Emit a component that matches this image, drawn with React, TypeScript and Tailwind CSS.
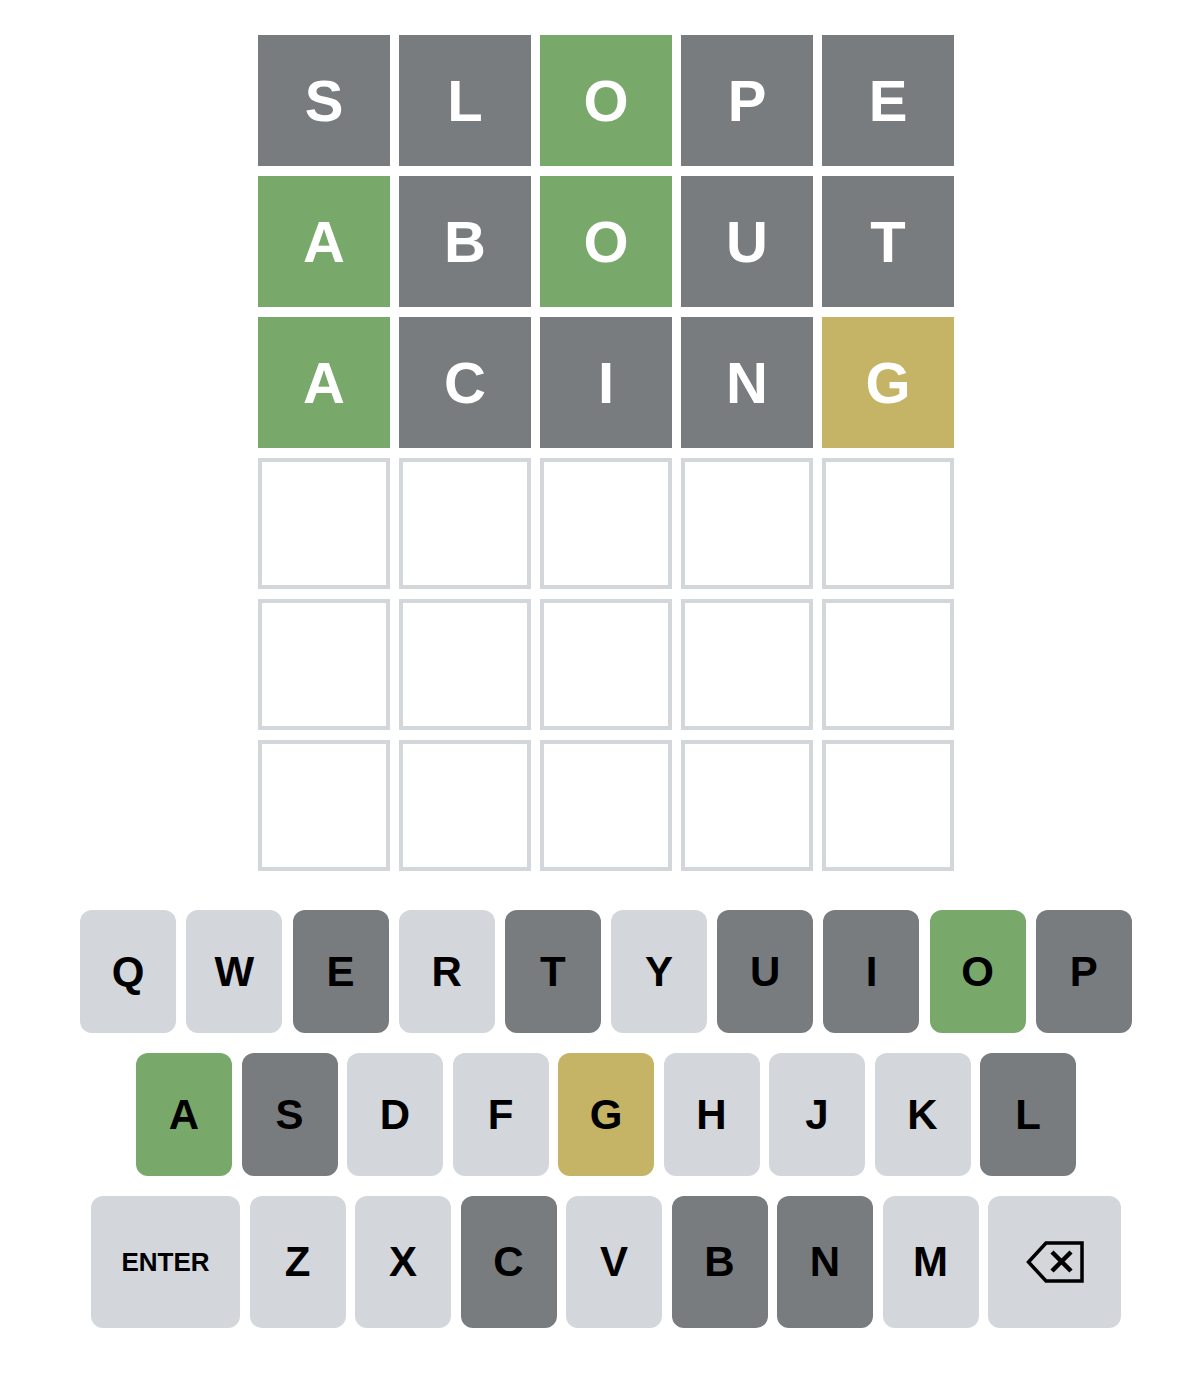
import React from "react";

type St = "g" | "y" | "x" | "u";

const rows: { l: string; s: St }[][] = [
  [
    { l: "S", s: "x" },
    { l: "L", s: "x" },
    { l: "O", s: "g" },
    { l: "P", s: "x" },
    { l: "E", s: "x" },
  ],
  [
    { l: "A", s: "g" },
    { l: "B", s: "x" },
    { l: "O", s: "g" },
    { l: "U", s: "x" },
    { l: "T", s: "x" },
  ],
  [
    { l: "A", s: "g" },
    { l: "C", s: "x" },
    { l: "I", s: "x" },
    { l: "N", s: "x" },
    { l: "G", s: "y" },
  ],
];

const keyState: Record<string, St> = {
  E: "x", T: "x", U: "x", I: "x", O: "g", P: "x",
  A: "g", S: "x", G: "y", L: "x",
  C: "x", B: "x", N: "x",
};

const tileBg: Record<St, string> = {
  g: "bg-[#79a86b]",
  y: "bg-[#c5b366]",
  x: "bg-[#787c7e]",
  u: "bg-white",
};

const keyBg: Record<St, string> = {
  g: "bg-[#79a86b]",
  y: "bg-[#c5b366]",
  x: "bg-[#787c7e]",
  u: "bg-[#d3d6da]",
};

function Tile({ l, s }: { l?: string; s: St }) {
  if (s === "u") {
    return <div className="w-[132px] h-[131px] border-4 border-[#d3d6da] bg-white" />;
  }
  return (
    <div
      className={`w-[132px] h-[131px] ${tileBg[s]} flex items-center justify-center text-white font-bold text-[58px] leading-none`}
    >
      {l}
    </div>
  );
}

function Key({ k, tall }: { k: string; tall?: boolean }) {
  const s = keyState[k] ?? "u";
  return (
    <div
      className={`w-[96px] ${tall ? "h-[132px]" : "h-[123px]"} rounded-xl ${keyBg[s]} flex items-center justify-center text-black font-bold text-[42px] leading-none`}
    >
      {k}
    </div>
  );
}

function Backspace() {
  return (
    <div className="w-[133px] h-[132px] rounded-xl bg-[#d3d6da] flex items-center justify-center">
      <svg width="60" height="44" viewBox="0 0 60 44" fill="none" stroke="black">
        <path d="M57 3 H21 L3.5 22 L21 41 H57 Z" strokeWidth="3.5" strokeLinejoin="miter" />
        <path d="M27 12 L46 31 M46 12 L27 31" strokeWidth="4.5" />
      </svg>
    </div>
  );
}

export default function App() {
  return (
    <div
      className="w-[1202px] h-[1380px] bg-white flex flex-col items-center pl-[10px]"
      style={{ fontFamily: '"Liberation Sans", Arial, sans-serif' }}
    >
      <div className="mt-[35px] flex flex-col gap-[10px]">
        {[0, 1, 2, 3, 4, 5].map((r) => (
          <div key={r} className="flex gap-[9px]">
            {[0, 1, 2, 3, 4].map((c) =>
              rows[r] ? (
                <Tile key={c} l={rows[r][c].l} s={rows[r][c].s} />
              ) : (
                <Tile key={c} s="u" />
              )
            )}
          </div>
        ))}
      </div>

      <div className="mt-[39px] flex flex-col items-center gap-[20px]">
        <div className="flex gap-[10.2px]">
          {"QWERTYUIOP".split("").map((k) => (
            <Key key={k} k={k} />
          ))}
        </div>
        <div className="flex gap-[9.5px]">
          {"ASDFGHJKL".split("").map((k) => (
            <Key key={k} k={k} />
          ))}
        </div>
        <div className="flex gap-[9.5px]">
          <div className="w-[149px] h-[132px] rounded-xl bg-[#d3d6da] flex items-center justify-center text-black font-bold text-[26px] leading-none">
            ENTER
          </div>
          {"ZXCVBNM".split("").map((k) => (
            <Key key={k} k={k} tall />
          ))}
          <Backspace />
        </div>
      </div>
    </div>
  );
}
